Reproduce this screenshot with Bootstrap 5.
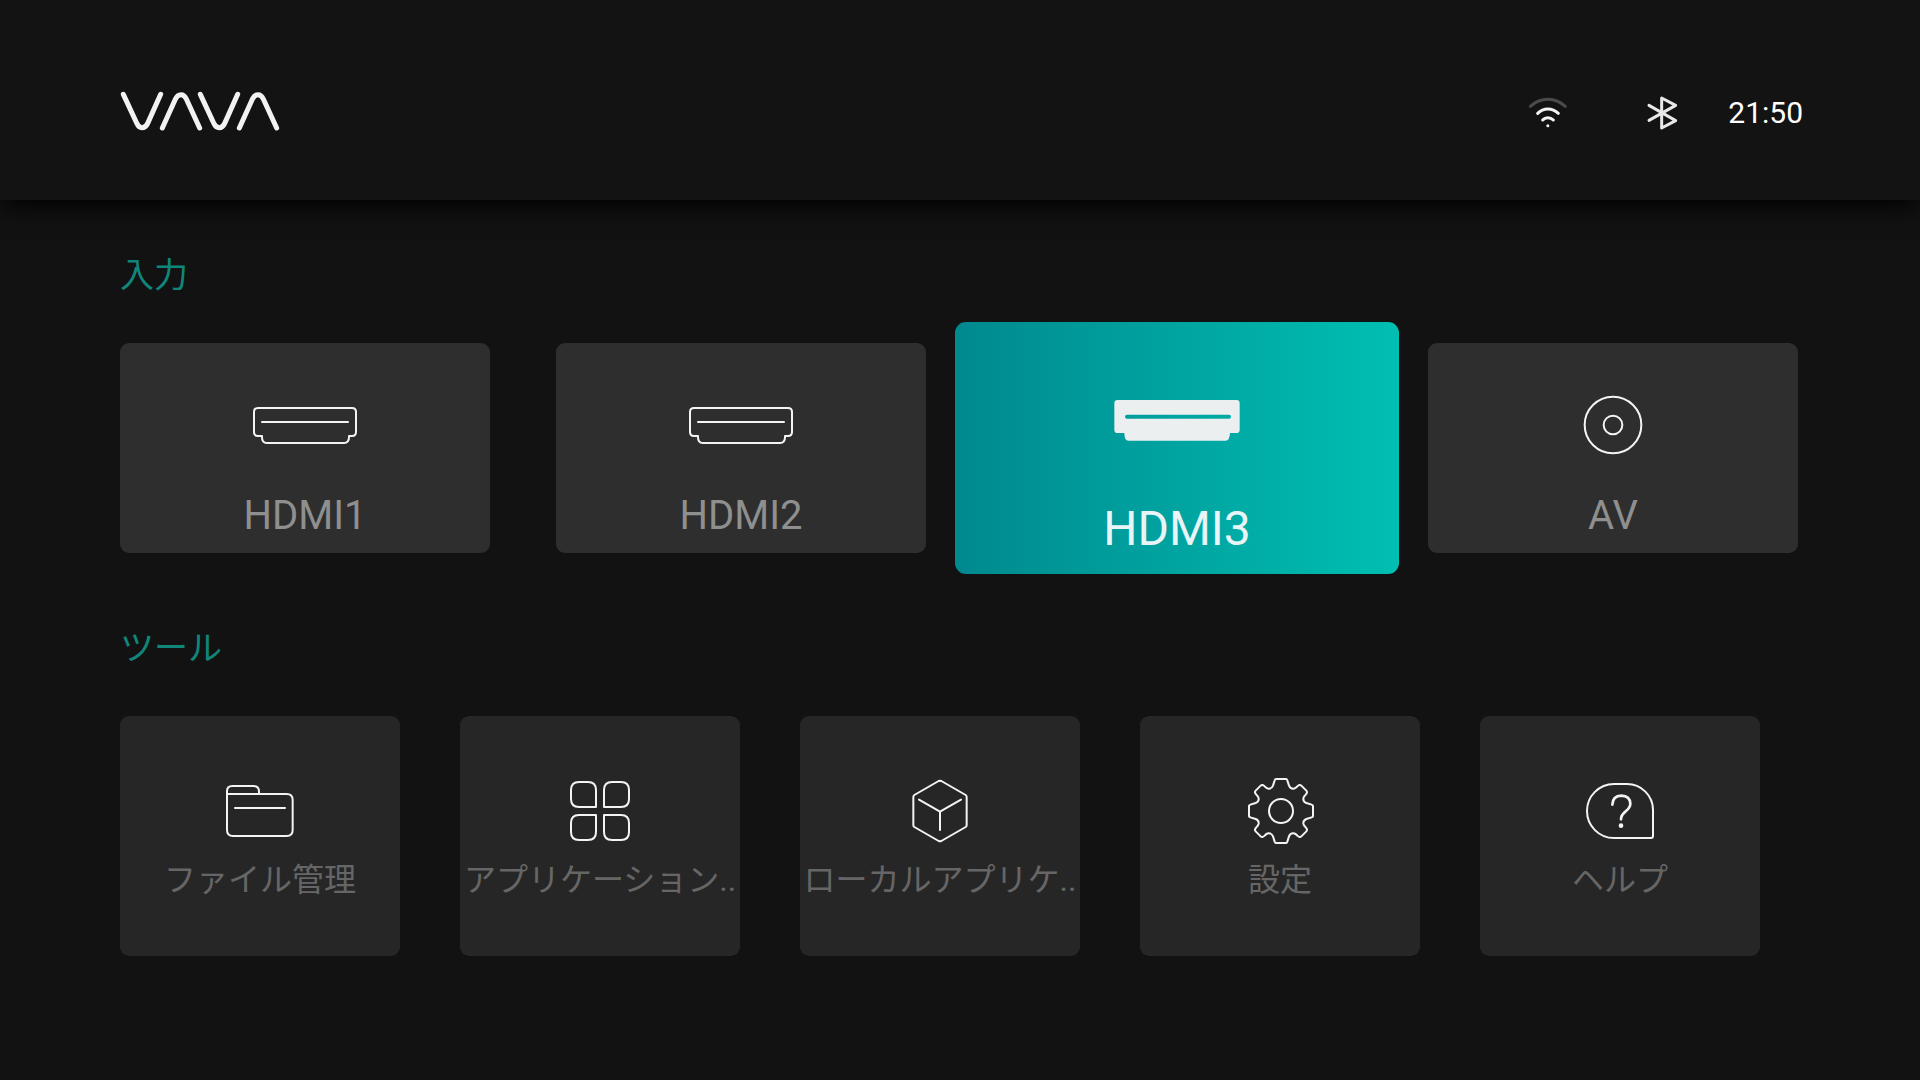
<!DOCTYPE html>
<html lang="ja">
<head>
<meta charset="utf-8">
<meta name="viewport" content="width=device-width, initial-scale=1">
<title>VAVA</title>
<link href="https://cdn.jsdelivr.net/npm/bootstrap@5.3.0/dist/css/bootstrap.min.css" rel="stylesheet">
<style>
  body { background: #121212; color: #fff; font-family: Roboto, "Noto Sans CJK JP", sans-serif; }
  .topbar { height: 200px; padding: 25px 117px 0 120px; background: #131313; box-shadow: 0 8px 24px -2px #000; }
  .logo svg { overflow: visible; }
  .status-gap { margin-right: 74px; }
  .clock { margin-left: 46px; font-size: 30px; line-height: 36px; }
  .launcher { padding: 50px 122px 50px 120px; }
  .section-title { margin: 0 0 43px; font-size: 34px; line-height: 50px; font-weight: 400; color: #10867b; }
  .inputs { display: grid; grid-template-columns: repeat(4, minmax(0, 1fr)); gap: 66px; margin-bottom: 70px; }
  .tools { display: grid; grid-template-columns: repeat(5, minmax(0, 1fr)); gap: 60px; margin-right: 38px; }
  .tile { --bs-btn-padding-x: 0; --bs-btn-padding-y: 0; --bs-btn-border-width: 0; --bs-btn-border-radius: 9px; }
  .tile svg { flex: none; stroke: #f4f4f4; fill: none; stroke-width: 6; stroke-linecap: round; stroke-linejoin: round; }
  .input-tile { min-height: 210px; padding-top: 50px; background: #2e2e2e; color: #8f8f8f; font-size: 40px; line-height: 48px; }
  .input-tile span { margin-top: 35px; }
  .input-tile.focused { height: 252px; margin: -21px -37px; padding-top: 66px; border-radius: 11px; background: linear-gradient(90deg, #00898f, #00bfb2); color: #e9f4f7; font-size: 48px; line-height: 56px; }
  .input-tile.focused span { margin-top: 49px; }
  .input-tile.focused svg { fill: #eceff0; stroke: none; }
  .tool-tile { min-height: 240px; padding-top: 55px; background: #262626; color: #666; font-size: 32px; line-height: 48px; }
  .tool-tile span { margin-top: 5px; white-space: nowrap; }
</style>
</head>
<body>
<header class="topbar d-flex align-items-center justify-content-between">
  <a href="#" aria-label="VAVA" class="logo d-flex">
    <svg width="160" height="40" viewBox="60 66 480 120" fill="none" stroke="#f2f2f2" stroke-width="15" stroke-linecap="round" stroke-linejoin="round">
      <path d="M70 70L110 156Q116 170 126 170Q137 170 143 157L182 70"/>
      <path d="M187 171L226 85Q232 71 243 71Q253 71 259 84L299 171"/>
      <path d="M301 70L341 156Q347 170 358 170Q368 170 374 157L413 70"/>
      <path d="M418 171L457 85Q463 71 474 71Q484 71 490 84L530 171"/>
    </svg>
  </a>
  <div class="d-flex align-items-center">
    <svg class="status-gap" width="40" height="40" viewBox="84 37 120 120" fill="none" stroke="#f4f4f4" stroke-width="9" stroke-linecap="round" role="img" aria-label="Wi-Fi">
      <path d="M91 77Q115 56 143.500 56T196 77" stroke="#4b4b4b"/>
      <path d="M113 98Q126 85 143.500 85T175 98"/>
      <path d="M128 118Q134 111 143.500 111T160 118"/>
      <circle cx="143.500" cy="135" r="4.500" fill="#f4f4f4" stroke="none"/>
    </svg>
    <svg width="40" height="40" viewBox="427 38 120 120" fill="none" stroke="#e8e8e8" stroke-width="9" stroke-linecap="round" stroke-linejoin="round" role="img" aria-label="Bluetooth">
      <path d="M448 75L528 121L486 143V53L528 75L448 120"/>
    </svg>
    <time class="clock">21:50</time>
  </div>
</header>

<main class="launcher">
  <section>
    <h2 class="section-title">入力</h2>
    <div class="inputs">
      <button type="button" class="btn tile input-tile d-flex flex-column align-items-center">
        <svg width="120" height="64" viewBox="435 489 360 192" aria-hidden="true"><path d="M474 534H756Q768 534 768 546V606Q768 618 756 618H747V622Q747 639 732 639H500Q486 639 486 622V618H474Q462 618 462 606V546Q462 534 474 534ZM486 576H744"/></svg>
        <span>HDMI1</span>
      </button>
      <button type="button" class="btn tile input-tile d-flex flex-column align-items-center">
        <svg width="120" height="64" viewBox="435 489 360 192" aria-hidden="true"><path d="M474 534H756Q768 534 768 546V606Q768 618 756 618H747V622Q747 639 732 639H500Q486 639 486 622V618H474Q462 618 462 606V546Q462 534 474 534ZM486 576H744"/></svg>
        <span>HDMI2</span>
      </button>
      <button type="button" class="btn tile input-tile focused d-flex flex-column align-items-center">
        <svg width="144" height="64" viewBox="495 234 432 192" aria-hidden="true"><path fill-rule="evenodd" d="M533 270H889Q899 270 899 280V359Q899 369 889 369H870Q869 392 857 392H565Q553 392 553 369H533Q523 369 523 359V280Q523 270 533 270ZM561 314Q555 314 555 320T561 326H867Q873 326 873 320T867 314Z"/></svg>
        <span>HDMI3</span>
      </button>
      <button type="button" class="btn tile input-tile d-flex flex-column align-items-center">
        <svg width="120" height="64" viewBox="429 189 360 192" aria-hidden="true"><circle cx="609" cy="285" r="85"/><circle cx="609" cy="285" r="28"/></svg>
        <span>AV</span>
      </button>
    </div>
  </section>

  <section>
    <h2 class="section-title">ツール</h2>
    <div class="tools">
      <button type="button" class="btn tile tool-tile d-flex flex-column align-items-center">
        <svg width="80" height="80" viewBox="360 513 240 240" aria-hidden="true"><path d="M381 582V574Q381 558 397 558H460Q477 558 477 575V582M381 582H560Q578 582 578 600V690Q578 708 560 708H399Q381 708 381 690ZM405 624H555"/></svg>
        <span>ファイル管理</span>
      </button>
      <button type="button" class="btn tile tool-tile d-flex flex-column align-items-center">
        <svg width="80" height="80" viewBox="330 213 240 240" aria-hidden="true"><path d="M387 246H414Q438 246 438 270V321H387Q363 321 363 297V270Q363 246 387 246ZM486 246H513Q537 246 537 270V297Q537 321 513 321H462V270Q462 246 486 246ZM387 345H438V396Q438 420 414 420H387Q363 420 363 396V369Q363 345 387 345ZM462 345H513Q537 345 537 369V396Q537 420 513 420H486Q462 420 462 396Z"/></svg>
        <span>アプリケーション..</span>
      </button>
      <button type="button" class="btn tile tool-tile d-flex flex-column align-items-center">
        <svg width="80" height="80" viewBox="330 213 240 240" aria-hidden="true"><path d="M446 243Q450 241 454 243L527 285Q530 287 530 291V375Q530 379 527 381L454 423Q450 425 446 423L373 381Q370 379 370 375V291Q370 287 373 285ZM387 299L450 335L513 299M450 335V390"/></svg>
        <span>ローカルアプリケ..</span>
      </button>
      <button type="button" class="btn tile tool-tile d-flex flex-column align-items-center">
        <svg width="80" height="80" viewBox="330 213 240 240" aria-hidden="true">
          <defs><path id="cog" d="M-14-96H14Q18-96 19-92L24-76Q28-66 38-67Q44-68 49-74Q56-81 61-76L76-61Q81-56 74-49Q68-44 67-38Q66-28 76-24L92-19Q96-18 96-14V14"/></defs>
          <g transform="translate(453 333)"><use href="#cog"/><use href="#cog" transform="rotate(90)"/><use href="#cog" transform="rotate(180)"/><use href="#cog" transform="rotate(270)"/><circle r="36"/></g>
        </svg>
        <span>設定</span>
      </button>
      <button type="button" class="btn tile tool-tile d-flex flex-column align-items-center">
        <svg width="80" height="80" viewBox="330 213 240 240" aria-hidden="true">
          <path d="M432 252H471A78 78 0 0 1 549 330V408Q549 414 543 414H432A81 81 0 0 1 432 252Z"/>
          <path stroke-width="8" d="M427 314Q428 288 454 287Q480 288 481 311Q481 322 467 334Q453 345 453 358"/>
          <circle cx="453" cy="377" r="7" fill="#f4f4f4" stroke="none"/>
        </svg>
        <span>ヘルプ</span>
      </button>
    </div>
  </section>
</main>
<script src="https://cdn.jsdelivr.net/npm/bootstrap@5.3.0/dist/js/bootstrap.bundle.min.js"></script>
</body>
</html>
